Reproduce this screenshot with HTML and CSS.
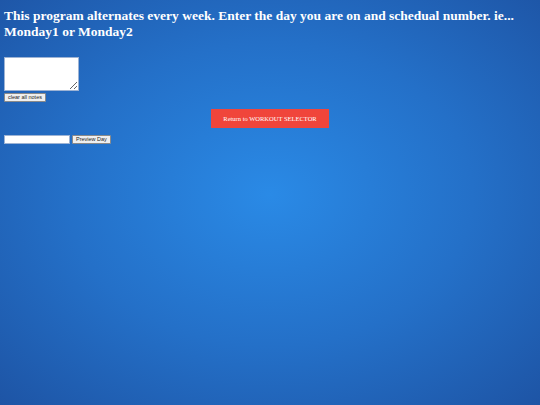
FILE: index.html
```html
<!DOCTYPE html>
<html>
<head>
<meta charset="utf-8">
<link rel="stylesheet" href="styles.css">
</head>
<body>
<h1 class="title">This program alternates every week. Enter the day you are on and schedual number. ie... Monday1 or Monday2</h1>
<div class="notes">
  <textarea class="notes-box"></textarea>
  <button class="small-btn">clear all notes</button>
</div>
<div class="return-row">
  <button class="return-btn">Return to WORKOUT SELECTOR</button>
</div>
<div class="preview-row">
  <input class="day-input" type="text">
  <button class="small-btn">Preview Day</button>
</div>
</body>
</html>
```
FILE: styles.css
```css
html {
  height: 100%;
}
body {
  margin: 0;
  padding: 4px;
  height: 100%;
  box-sizing: border-box;
  background: radial-gradient(ellipse 75% 75% at 50% 48%, #2a8ae6 0%, #2470c8 50%, #1d52a2 100%);
  font-family: "Liberation Serif", serif;
  overflow: hidden;
}
.title {
  margin: 4px 0 0 0;
  color: #ffffff;
  font-family: "Liberation Serif", serif;
  font-weight: bold;
  font-size: 13.5px;
  line-height: 16px;
}
.notes {
  margin-top: 17px;
  display: flex;
  flex-direction: column;
  align-items: flex-start;
  gap: 2px;
}
.notes-box {
  width: 75px;
  height: 34px;
  box-sizing: border-box;
  margin: 0;
  padding: 0;
  border: 1px solid #9db3d4;
  background: #ffffff;
  resize: both;
}
.small-btn {
  margin: 0;
  padding: 0 3px;
  height: 9px;
  font-family: "Liberation Sans", Arial, sans-serif;
  font-size: 5.5px;
  line-height: 7px;
  color: #222;
  background: #efefef;
  border: 1px solid #8a8a8a;
  border-radius: 1px;
}
.return-row {
  display: flex;
  justify-content: center;
  margin-top: 7px;
}
.return-btn {
  margin: 0;
  width: 118px;
  height: 19px;
  padding: 0;
  background: #f0453b;
  color: #ffffff;
  border: none;
  font-family: "Liberation Serif", serif;
  font-size: 6.5px;
}
.preview-row {
  margin-top: 7px;
  display: flex;
  align-items: center;
  gap: 2px;
}
.day-input {
  margin: 0;
  width: 66px;
  height: 9px;
  box-sizing: border-box;
  padding: 0;
  border: 1px solid #9db3d4;
  background: #fff;
}
```
